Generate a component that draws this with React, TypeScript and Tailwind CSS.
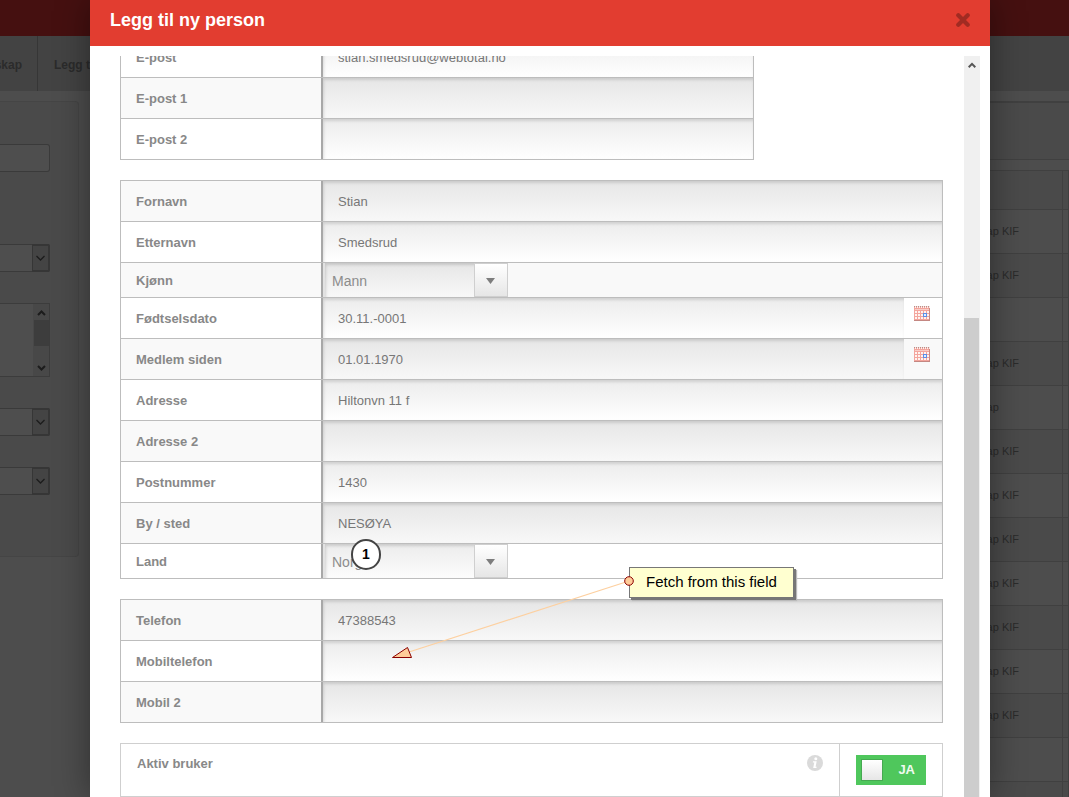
import React from "react";

type Kind = "text" | "select" | "date";

interface Field {
  id: string;
  label: string;
  value?: string;
  kind?: Kind;
}

const emails: Field[] = [
  { id: "epost", label: "E-post", value: "stian.smedsrud@webtotal.no" },
  { id: "epost1", label: "E-post 1" },
  { id: "epost2", label: "E-post 2" },
];

const personal: Field[] = [
  { id: "fornavn", label: "Fornavn", value: "Stian" },
  { id: "etternavn", label: "Etternavn", value: "Smedsrud" },
  { id: "kjonn", label: "Kjønn", value: "Mann", kind: "select" },
  { id: "fodselsdato", label: "Fødtselsdato", value: "30.11.-0001", kind: "date" },
  { id: "medlem", label: "Medlem siden", value: "01.01.1970", kind: "date" },
  { id: "adresse", label: "Adresse", value: "Hiltonvn 11 f" },
  { id: "adresse2", label: "Adresse 2" },
  { id: "postnummer", label: "Postnummer", value: "1430" },
  { id: "sted", label: "By / sted", value: "NESØYA" },
  { id: "land", label: "Land", value: "Norge", kind: "select" },
];

const phones: Field[] = [
  { id: "telefon", label: "Telefon", value: "47388543" },
  { id: "mobil", label: "Mobiltelefon" },
  { id: "mobil2", label: "Mobil 2" },
];

const memberships = [
  "Medlemskap KIF",
  "Medlemskap KIF",
  "",
  "Medlemskap KIF",
  "Medlemskap",
  "Medlemskap KIF",
  "Medlemskap KIF",
  "Medlemskap KIF",
  "Medlemskap KIF",
  "Medlemskap KIF",
  "Medlemskap KIF",
  "Medlemskap KIF",
  "",
  "",
];

function CalendarIcon() {
  return (
    <svg width="16" height="15" viewBox="0 0 16 15" shapeRendering="crispEdges" aria-hidden="true">
      <rect x="0" y="1" width="16" height="14" fill="#f3a59d" />
      {[0, 2, 4, 6, 8, 10, 12, 14].map((x) => (
        <React.Fragment key={x}>
          <rect x={x} y="0" width="1" height="1" fill="#b98f89" />
          <rect x={x + 1} y="0" width="1" height="1" fill="#f6e3e0" />
          <rect x={x + 1} y="1" width="1" height="1" fill="#fdf3f1" />
        </React.Fragment>
      ))}
      <rect x="1" y="3" width="14" height="1" fill="#f9cdc7" />
      {[5, 8, 11].map((y) =>
        [1, 4, 7, 10, 13].map((x) => (
          <rect key={`${x}-${y}`} x={x} y={y} width="2" height="2" fill="#fff3f0" />
        )),
      )}
      <rect x="15" y="2" width="1" height="13" fill="#c98d87" />
      <rect x="0" y="14" width="16" height="1" fill="#c48782" />
      <rect x="9" y="7" width="4" height="4" fill="#5b8fe8" />
      <rect x="10" y="8" width="2" height="2" fill="#e4eeff" />
    </svg>
  );
}

function SelectBox({ field, shaded }: { field: Field; shaded: boolean }) {
  return (
    <div className="relative w-[185px]">
      <select
        id={field.id}
        defaultValue={field.value}
        className={`h-full w-full appearance-none border-l-2 border-[#e2e2e2] bg-linear-to-b pt-[2px] pl-[7px] text-[14px] text-[#8c8c8c] shadow-[inset_1px_2px_3px_rgba(0,0,0,0.14)] outline-none ${shaded ? "from-[#e6e6e6] to-[#f8f8f8]" : "from-[#ececec] to-[#fcfcfc]"}`}
      >
        <option>{field.value}</option>
      </select>
      <span className="pointer-events-none absolute inset-y-0 right-0 flex w-[34px] items-center justify-center border border-[#cfcfcf] bg-linear-to-b from-white to-[#e6e6e6] pt-px">
        <svg width="10" height="6" viewBox="0 0 10 6" aria-hidden="true">
          <path d="M0 0h9L4.500 6z" fill="#7d7d7d" />
        </svg>
      </span>
    </div>
  );
}

function FieldRow({ field, shaded }: { field: Field; shaded: boolean }) {
  const isSelect = field.kind === "select";
  return (
    <div
      className={`flex border-b border-[#bdbdbd] ${isSelect ? "h-[35px]" : "h-[41px]"} ${shaded ? "bg-[#f9f9f9]" : "bg-white"}`}
    >
      <label
        htmlFor={field.id}
        className="flex w-[202px] shrink-0 items-center border-r-2 border-[#a8a8a8] pt-[2px] pl-[15px] text-[13px] font-bold text-[#888]"
      >
        {field.label}
      </label>
      {isSelect ? (
        <SelectBox field={field} shaded={shaded} />
      ) : (
        <input
          id={field.id}
          type="text"
          defaultValue={field.value}
          className={`min-w-0 flex-1 bg-linear-to-b pt-[2px] pl-[15px] text-[13px] text-[#777] shadow-[inset_1px_2px_3px_rgba(0,0,0,0.12)] outline-none ${shaded ? "from-[#e6e6e6] to-[#f8f8f8]" : "from-[#ececec] to-white"}`}
        />
      )}
      {field.kind === "date" && (
        <button type="button" aria-label={`Velg ${field.label}`} className="flex w-[38px] pt-2 pl-[10px]">
          <CalendarIcon />
        </button>
      )}
    </div>
  );
}

function FieldGroup({ fields, firstShaded = true, className = "" }: { fields: Field[]; firstShaded?: boolean; className?: string }) {
  return (
    <div className={`border-x border-t border-[#bdbdbd] ${className}`}>
      {fields.map((f, i) => (
        <FieldRow key={f.id} field={f} shaded={(i % 2 === 0) === firstShaded} />
      ))}
    </div>
  );
}

function Chevron({ up = false }: { up?: boolean }) {
  return (
    <svg width="9" height="6" viewBox="0 0 9 6" fill="none" stroke="#1c1c1c" strokeWidth="2" aria-hidden="true">
      <path d={up ? "M1 5l3.500-3.500L8 5" : "M1 1l3.500 3.500L8 1"} />
    </svg>
  );
}

function DimSelect({ label, className }: { label: string; className: string }) {
  return (
    <div className={`relative h-7 w-[50px] ${className}`}>
      <select
        aria-label={label}
        className="h-full w-full appearance-none rounded-r-[3px] border border-l-0 border-[#3a3a3a] bg-[#4e4e4e]"
      />
      <span className="pointer-events-none absolute inset-y-0 right-0 flex w-[18px] items-center justify-center rounded-r-[2px] border-2 border-l border-[#363636] bg-[#444]">
        <svg width="9" height="6" viewBox="0 0 9 6" fill="none" stroke="#1c1c1c" strokeWidth="1.300" aria-hidden="true">
          <path d="M0.500 1L4.500 5l4-4" />
        </svg>
      </span>
    </div>
  );
}

function Backdrop() {
  return (
    <div className="flex h-full flex-col bg-[#4d4d4d] text-[#2b2b2b]">
      <header className="h-9 shrink-0 bg-[#451010]" />
      <nav className="flex h-[55px] shrink-0 bg-[#434343] text-[12px] font-bold whitespace-nowrap">
        <a href="#medlemskap" className="flex w-[38px] items-center justify-end overflow-hidden border-r border-[#363636] pt-[2px] pr-[15px]">
          Medlemskap
        </a>
        <a href="#ny" className="flex items-center pt-[2px] pl-4">
          Legg til
        </a>
      </nav>
      <div className="flex min-h-0 flex-1 items-start gap-3 pt-[10px]">
        <aside className="h-[456px] w-[79px] shrink-0 rounded-r-[4px] border border-l-0 border-[#454545] bg-[#4a4a4a] pt-[42px]">
          <input
            aria-label="Søk"
            className="block h-7 w-[50px] rounded-r-[3px] border border-l-0 border-[#3a3a3a] bg-[#4e4e4e]"
          />
          <DimSelect label="Type" className="mt-[72px]" />
          <div className="mt-[31px] flex h-[74px] w-[50px] justify-end border border-l-0 border-[#3c3c3c] bg-[#4e4e4e]">
            <div className="flex w-4 flex-col items-center bg-[#484848] pt-[6px] pb-[5px]">
              <Chevron up />
              <div className="mt-1 w-[15px] grow-0 basis-[26px] bg-[#3d3d3d]" />
              <div className="flex-1" />
              <Chevron />
            </div>
          </div>
          <DimSelect label="Status" className="mt-[31px]" />
          <DimSelect label="Gruppe" className="mt-[31px]" />
        </aside>
        <main className="flex-1">
          <div className="mb-[10px] h-[59px] border-t-2 border-b border-[#404040] bg-[#4a4a4a]" />
          <table className="w-full border-collapse text-[11px]">
            <thead>
              <tr className="h-[39px] border border-[#404040] bg-[#4a4a4a]">
                <th />
                <th className="w-[140px] border-r border-[#404040]" />
                <th className="w-[6px]" />
              </tr>
            </thead>
            <tbody>
              {memberships.map((m, i) => (
                <tr key={i} className={`h-11 border border-[#404040] ${i % 2 ? "bg-[#4a4a4a]" : "bg-[#4d4d4d]"}`}>
                  <td />
                  <td className="border-r border-[#404040] pl-[14px] whitespace-nowrap">{m}</td>
                  <td />
                </tr>
              ))}
            </tbody>
          </table>
        </main>
      </div>
    </div>
  );
}

function ScrollTrack() {
  return (
    <div className="mr-[10px] flex w-4 shrink-0 flex-col bg-[#f0f0f0]">
      <button type="button" aria-label="Rull opp" className="flex h-[262px] w-[15px] shrink-0 justify-center pt-[6px]">
        <svg width="8" height="6" viewBox="0 0 8 6" fill="none" stroke="#555" strokeWidth="2" aria-hidden="true">
          <path d="M0.700 5.200L4 1.900l3.300 3.300" />
        </svg>
      </button>
      <div className="w-[15px] flex-1 bg-[#cdcdcd]" />
    </div>
  );
}

function ActiveRow() {
  return (
    <div className="flex h-[54px] shrink-0 border border-[#cfcfcf] bg-white">
      <label htmlFor="aktiv" className="flex-1 pt-3 pl-4 text-[13px] leading-4 font-bold text-[#888]">
        Aktiv bruker
      </label>
      <svg className="mt-[11px] mr-4" width="16" height="16" viewBox="0 0 16 16" aria-hidden="true">
        <circle cx="8" cy="8" r="8" fill="#dadada" />
        <circle cx="8.800" cy="3.700" r="1.500" fill="#fff" />
        <path d="M6 6.300h3.700L8.600 11.700h1.100l-.3 1.200H6.200l1.100-5.400H5.800z" fill="#fff" />
      </svg>
      <div className="flex w-[103px] justify-center border-l border-[#cfcfcf] pt-[11px]">
        <label className="flex h-[30px] w-[70px] items-center justify-between bg-[#4fc75c] pr-[11px] pl-[5px] text-[13px] font-bold text-[#effbf0]">
          <input id="aktiv" type="checkbox" defaultChecked className="peer sr-only" />
          <span className="h-[22px] w-[22px] border border-[#46a951] bg-linear-to-b from-white to-[#e6e6e6]" />
          JA
        </label>
      </div>
    </div>
  );
}

function Annotations() {
  return (
    <>
      <svg className="pointer-events-none absolute top-[570px] left-[295px]" width="260" height="100" viewBox="385 570 260 100" aria-hidden="true">
        <path d="M629 581L409 652" stroke="#fdd0a0" strokeWidth="1.200" />
        <path d="M392.500 657.500L407.500 647.500L411.500 657.500z" fill="#ffcc99" stroke="#8b0000" />
      </svg>
      <div className="absolute top-[567px] left-[539px] border border-[#777] bg-[#ffffd0] px-4 pt-[3px] pb-[5px] text-[15px] leading-[21px] whitespace-nowrap text-black shadow-[2px_2px_0_#777,3px_3px_1px_#bbb]">
        Fetch from this field
      </div>
      <svg className="pointer-events-none absolute top-[576px] left-[534px]" width="10" height="10" viewBox="0 0 10 10" aria-hidden="true">
        <circle cx="5" cy="5" r="4.300" fill="#ffcc99" stroke="#8b0000" />
      </svg>
      <div className="absolute top-[539px] left-[261px] flex h-[31px] w-[30px] items-center justify-center rounded-full border-2 border-[#444] bg-white text-[14px] font-bold text-black">
        1
      </div>
    </>
  );
}

export default function App() {
  return (
    <div className="relative h-screen overflow-hidden font-['Liberation_Sans',Arial,sans-serif]">
      <Backdrop />
      <div className="absolute inset-0 flex pr-[79px] pl-[90px]">
        <section
          role="dialog"
          aria-label="Legg til ny person"
          className="relative flex min-w-0 flex-1 flex-col bg-white shadow-[0_0_32px_rgba(0,0,0,0.4)]"
        >
          <header className="flex h-[46px] shrink-0 items-center justify-between bg-[#e23d30] pr-5 pb-[6px] pl-5">
            <h1 className="text-[18px] font-bold text-white">Legg til ny person</h1>
            <button type="button" aria-label="Lukk">
              <svg width="14" height="14" viewBox="0 0 14 14" stroke="#a12b22" strokeWidth="4.200" strokeLinecap="round" aria-hidden="true">
                <path d="M2.300 2.300l9.400 9.400M11.700 2.300l-9.400 9.400" />
              </svg>
            </button>
          </header>
          <div className="flex min-h-0 flex-1 pt-[10px]">
            <form className="flex min-w-0 flex-1 flex-col overflow-hidden pr-[21px] pl-[30px]">
              <FieldGroup fields={emails} firstShaded={false} className="-mt-5 w-[634px] max-w-full shrink-0" />
              <FieldGroup fields={personal} className="mt-5 shrink-0" />
              <FieldGroup fields={phones} className="mt-5 mb-5 shrink-0" />
              <ActiveRow />
            </form>
            <ScrollTrack />
          </div>
          <Annotations />
        </section>
      </div>
    </div>
  );
}
